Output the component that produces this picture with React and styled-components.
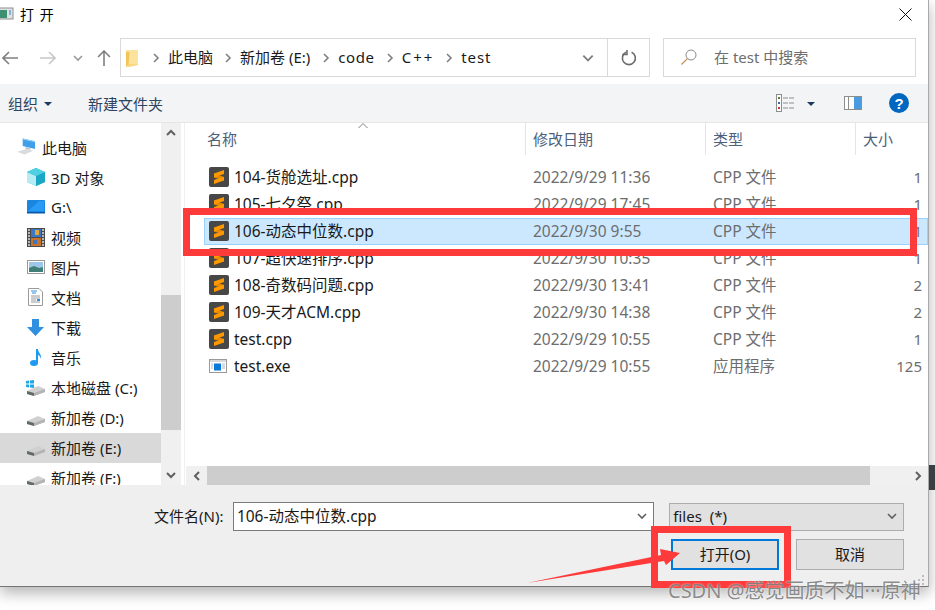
import { Fragment } from 'react';
import styled, { createGlobalStyle } from 'styled-components';

const FONT = '"Noto Sans", "Noto Sans CJK SC", sans-serif';

const GlobalStyle = createGlobalStyle`
	html, body {
		margin: 0;
		background: #fff;
		overflow: hidden;
	}
	* {
		box-sizing: border-box;
	}
`;

const Page = styled.div`
	position: relative;
	width: 935px;
	height: 610px;
	overflow: hidden;
	background: #fff;
	font-family: ${FONT};
	font-size: 15px;
	color: #1a1a1a;
`;

const Window = styled.div`
	width: 929px;
	height: 587px;
	display: flex;
	flex-direction: column;
	background: #fff;
	border-right: 1px solid #a9a9a9;
	border-bottom: 1px solid #747474;
	box-shadow: 0 6px 14px rgba(0, 0, 0, 0.3);
`;

const TitleBar = styled.div`
	height: 38px;
	flex: none;
	display: flex;
	align-items: center;
	padding: 0 16px 10px 0;
`;

const TitleText = styled.span`
	margin-left: 6px;
	font-size: 14px;
	letter-spacing: 1px;
	flex: 1;
	color: #000;
`;

const NavRow = styled.div`
	height: 46px;
	flex: none;
	display: flex;
	align-items: flex-start;
`;

const NavButtons = styled.div`
	width: 120px;
	height: 39px;
	flex: none;
	display: grid;
	grid-template-columns: 2px 16px 22px 16px 16px 12px 13px 14px;
	align-items: center;
`;

const AddressBox = styled.div`
	width: 530px;
	height: 39px;
	flex: none;
	display: flex;
	align-items: center;
	border: 1px solid #d9d9d9;
	padding-left: 5px;
`;

const FolderSlot = styled.span`
	display: flex;
	margin-right: 11px;
`;

const CrumbLabel = styled.span`
	margin: 0 ${({ $after }) => $after}px 2px 6px;
	letter-spacing: ${({ $spacing }) => $spacing || 0}px;
	color: #1a1a1a;
	white-space: nowrap;
`;

const Spacer = styled.div`
	flex: 1;
`;

const RefreshCell = styled.div`
	width: 42px;
	height: 100%;
	display: flex;
	align-items: center;
	justify-content: center;
	border-left: 1px solid #d9d9d9;
	margin-left: 12px;
`;

const SearchBox = styled.div`
	width: 253px;
	height: 39px;
	flex: none;
	margin-left: 13px;
	display: flex;
	align-items: center;
	gap: 17px;
	padding: 0 0 2px 17px;
	border: 1px solid #d9d9d9;
	color: #6d6d6d;
`;

const Toolbar = styled.div`
	height: 39px;
	flex: none;
	display: flex;
	align-items: center;
	background: #f3f4f6;
	border-bottom: 1px solid #e6e6e6;
	padding: 0 19px 0 8px;
	color: #2d4560;
	font-size: 15px;
`;

const ToolLabel = styled.span`
	margin-right: 6px;
`;

const ToolGroup = styled.div`
	margin-left: ${({ $left }) => $left || 0}px;
	display: flex;
	align-items: center;
`;

const Caret = styled.span`
	width: 0;
	height: 0;
	margin: 1px 0 0 ${({ $left }) => $left || 0}px;
	border-left: 4px solid transparent;
	border-right: 4px solid transparent;
	border-top: 4px solid #1f3a5f;
`;

const Main = styled.div`
	height: 362px;
	flex: none;
	display: flex;
`;

const Sidebar = styled.div`
	width: 161px;
	flex: none;
	overflow: hidden;
	padding-top: 10px;
`;

const TreeRow = styled.div`
	height: 30px;
	flex: none;
	display: flex;
	align-items: center;
	gap: 6px;
	white-space: nowrap;
	padding: 0 0 2px ${({ $root }) => ($root ? 17 : 26)}px;
	background: ${({ $active }) => ($active ? '#d9d9d9' : 'transparent')};
`;

const IconSlot = styled.span`
	width: 19px;
	height: 20px;
	flex: none;
	display: flex;
	align-items: center;
	justify-content: center;
`;

const VScroll = styled.div`
	width: 20px;
	flex: none;
	display: flex;
	flex-direction: column;
	background: #f0f0f0;
`;

const ScrollButton = styled.div`
	height: ${({ $size }) => $size}px;
	width: ${({ $wide }) => ($wide ? '21px' : 'auto')};
	flex: none;
	display: flex;
	align-items: center;
	justify-content: center;
`;

const VThumb = styled.div`
	height: 135px;
	margin-top: 152px;
	background: #cdcdcd;
`;

const ListPane = styled.div`
	flex: 1;
	min-width: 0;
	display: flex;
	flex-direction: column;
	margin-left: 3px;
	border-left: 1px solid #f0f0f0;
`;

const HeaderRow = styled.div`
	position: relative;
	height: 32px;
	flex: none;
	display: grid;
	grid-template-columns: 341px 180px 150px 1fr;
	color: #4c607a;
	font-size: 15px;
`;

const HeaderCell = styled.div`
	display: flex;
	align-items: center;
	padding: 0 0 2px ${({ $pad }) => $pad || 7}px;
	border-right: ${({ $last }) => ($last ? 'none' : '1px solid #e5e5e5')};
`;

const SortMark = styled.svg`
	position: absolute;
	left: 173px;
	top: 0;
`;

const FileList = styled.div`
	flex: 1;
	min-height: 0;
	padding: 9px 0 0 19px;
`;

const FileRow = styled.div`
	height: 27px;
	display: grid;
	grid-template-columns: 25px 299px 180px 150px 1fr;
	align-items: center;
	padding: 0 0 3px 4px;
	border: 1px solid ${({ $selected }) => ($selected ? '#99d1ff' : 'transparent')};
	background: ${({ $selected }) => ($selected ? '#cce8ff' : 'transparent')};
	white-space: nowrap;
`;

const FileName = styled.span`
	color: #1a1a1a;
	font-size: 15.5px;
`;

const FileMeta = styled.span`
	color: #6d6d6d;
	font-size: 15.5px;
`;

const FileSize = styled.span`
	color: #6d6d6d;
	justify-self: end;
	padding-right: 5px;
`;

const HScroll = styled.div`
	height: 19px;
	flex: none;
	margin-left: 1px;
	display: flex;
	background: #f0f0f0;
`;

const HThumb = styled.div`
	width: 663px;
	background: #cdcdcd;
`;

const Footer = styled.div`
	position: relative;
	flex: 1;
	background: #efefef;
	padding: 17px 24px 0 154px;
`;

const NameRow = styled.div`
	display: flex;
	align-items: center;
`;

const NameLabel = styled.span`
	width: 79px;
	margin-bottom: 2px;
	white-space: nowrap;
`;

const NameInput = styled.div`
	width: 422px;
	height: 29px;
	display: flex;
	align-items: center;
	justify-content: space-between;
	padding: 0 5px 2px 3px;
	background: #fff;
	border: 1px solid #7a7a7a;
	font-size: 15.5px;
`;

const FilterSelect = styled.div`
	width: 235px;
	height: 28px;
	margin-left: 15px;
	display: flex;
	align-items: center;
	justify-content: space-between;
	padding: 0 5px 2px 3px;
	background: #e1e1e1;
	border: 1px solid #adadad;
	white-space: pre;
`;

const ButtonRow = styled.div`
	margin: 8px 0 0 517px;
	display: flex;
	gap: 17px;
`;

const DialogButton = styled.div`
	width: 108px;
	height: 31px;
	flex: none;
	display: flex;
	align-items: center;
	justify-content: center;
	padding-bottom: 2px;
	background: #e1e1e1;
	border: ${({ $primary }) => ($primary ? '2px solid #0078d7' : '1px solid #adadad')};
`;

const Grip = styled.svg`
	position: absolute;
	right: 3px;
	bottom: 0;
`;

const RedFrame = styled.div`
	position: absolute;
	left: ${({ $x }) => $x}px;
	top: ${({ $y }) => $y}px;
	width: ${({ $w }) => $w}px;
	height: ${({ $h }) => $h}px;
	border: 7px solid #ff3a3a;
`;

const ArrowMark = styled.svg`
	position: absolute;
	left: 520px;
	top: 540px;
`;

const EdgeBlock = styled.div`
	position: absolute;
	left: 929px;
	top: 465px;
	width: 6px;
	height: 25px;
	background: #3a3f42;
`;

const Watermark = styled.div`
	position: absolute;
	left: 668px;
	top: 575px;
	font-size: 20px;
	white-space: nowrap;
	color: rgba(110, 110, 110, 0.8);
	text-shadow: 0 0 2px rgba(255, 255, 255, 0.9);
`;

const Chevron = ({ dir = 'right', color = '#808080', size = 12, width = 1.6 }) => {
	const points = {
		right: '4,2 8,6 4,10',
		left: '8,2 4,6 8,10',
		down: '2,4 6,8 10,4',
		up: '2,8 6,4 10,8',
	};
	return (
		<svg width={size} height={size} viewBox="0 0 12 12" fill="none">
			<polyline points={points[dir]} stroke={color} strokeWidth={width} />
		</svg>
	);
};

const ArrowLeft = ({ color, flip }) => (
	<svg width="16" height="14" viewBox="0 0 16 14" fill="none" transform={flip ? 'scale(-1 1)' : undefined}>
		<path d="M1 7H16M7 1L1 7L7 13" stroke={color} strokeWidth="1.6" />
	</svg>
);

const ArrowUp = () => (
	<svg width="14" height="16" viewBox="0 0 14 16" fill="none">
		<path d="M7 16V1M1 7L7 1L13 7" stroke="#808080" strokeWidth="1.6" />
	</svg>
);

const WindowGlyph = () => (
	<svg width="14" height="14" viewBox="0 0 14 14">
		<rect x="-1" y="1" width="14" height="11" fill="#dfe3e6" stroke="#8d8d8d" />
		<rect x="0" y="3" width="7" height="8" fill="#3d8f6f" />
		<rect x="9" y="3" width="2" height="5" fill="#7fb4d8" />
	</svg>
);

const CloseGlyph = () => (
	<svg width="13" height="13" viewBox="0 0 13 13" fill="none">
		<path d="M0.5 0.5L12.5 12.5M12.5 0.5L0.5 12.5" stroke="#111" strokeWidth="1" />
	</svg>
);

const FolderGlyph = () => (
	<svg width="13" height="18" viewBox="0 0 13 18">
		<path d="M0 1H12V16L3 18H0Z" fill="#f9d77f" />
		<path d="M0 1H12V15H0Z" fill="#fbe39d" />
		<path d="M0 3V16H2.5L3.5 3Z" fill="#f2c55c" />
	</svg>
);

const RefreshGlyph = () => (
	<svg width="16" height="16" viewBox="0 0 16 16" fill="none">
		<path d="M10.6 2.2A6.5 6.5 0 1 1 5 2.3" stroke="#6d6d6d" strokeWidth="1.6" />
		<path d="M5 0V5.5H0.6" stroke="#6d6d6d" strokeWidth="1.6" transform="translate(1 -1)" />
	</svg>
);

const SearchGlyph = () => (
	<svg width="16" height="16" viewBox="0 0 16 16" fill="none">
		<circle cx="10" cy="6" r="5" stroke="#8a8a8a" />
		<path d="M6.4 9.6L0.5 15.5" stroke="#c58b52" strokeWidth="1.2" />
	</svg>
);

const ViewGlyph = () => (
	<svg width="19" height="18" viewBox="0 0 19 18" fill="none">
		<rect x="0.5" y="0.5" width="5" height="17" fill="#fff" stroke="#8d8d8d" />
		<rect x="2" y="3" width="2" height="2" fill="#5a7a3a" />
		<rect x="2" y="8" width="2" height="2" fill="#3e6aa0" />
		<rect x="2" y="13" width="2" height="2" fill="#c0392b" />
		<path d="M7 4H19M7 9H19M7 14H19" stroke="#8d8d8d" strokeDasharray="5 1" />
	</svg>
);

const PaneGlyph = () => (
	<svg width="18" height="14" viewBox="0 0 18 14">
		<rect x="0.5" y="0.5" width="17" height="13" fill="#fff" stroke="#8d8d8d" />
		<rect x="4" y="1" width="1" height="12" fill="#8d8d8d" />
		<rect x="10" y="1" width="7" height="12" fill="#4a9be0" />
	</svg>
);

const HelpGlyph = () => (
	<svg width="20" height="20" viewBox="0 0 20 20">
		<circle cx="10" cy="10" r="10" fill="#0067c0" />
		<text x="10" y="15.5" textAnchor="middle" fontSize="15" fontWeight="700" fontFamily="Liberation Sans" fill="#fff">?</text>
	</svg>
);

const SublimeGlyph = () => (
	<svg width="20" height="20" viewBox="0 0 20 20">
		<rect width="20" height="20" rx="2" fill="#474747" />
		<path d="M5 6.5L15 10V13.5L5 10.5Z" fill="#e68a00" />
		<path d="M15 3V7L5 10.5V6.5Z" fill="#ff9800" />
		<path d="M15 9.7V13.5L5 17V13Z" fill="#ff9800" />
	</svg>
);

const ExeGlyph = () => (
	<svg width="18" height="14" viewBox="0 0 18 14">
		<rect x="0.5" y="0.5" width="17" height="13" fill="#fff" stroke="#9a9a9a" />
		<rect x="1" y="1" width="16" height="2" fill="#d8d8d8" />
		<rect x="5" y="4.5" width="7" height="7" fill="#0a78d7" />
		<path d="M2 5H4M2 7H4M2 9H4M13 5H16M13 7H16M13 9H16" stroke="#aeb9c4" />
	</svg>
);

const ComputerGlyph = () => (
	<svg width="20" height="18" viewBox="0 0 20 18">
		<path d="M6 0L19 3V11L6 8Z" fill="#3f9fe8" />
		<path d="M6 0L19 3V4L6 1Z" fill="#9ad0f5" />
		<path d="M9 9L14 10V12L9 11Z" fill="#b9c3cb" />
		<path d="M0 14L10 11L17 13L8 17Z" fill="#d8dcdf" />
	</svg>
);

const CubeGlyph = () => (
	<svg width="18" height="18" viewBox="0 0 18 18">
		<path d="M9 0L18 4V14L9 18L0 14V4Z" fill="#25b9cf" />
		<path d="M0 4L9 8V18L0 14Z" fill="#b7ecf2" />
		<path d="M9 8L18 4V14L9 18Z" fill="#1aa6c5" />
		<path d="M9 0L18 4L9 8L0 4Z" fill="#4fd0e2" />
	</svg>
);

const ScreenGlyph = () => (
	<svg width="18" height="14" viewBox="0 0 18 14">
		<rect width="18" height="13" rx="1" fill="#1a86e0" />
		<path d="M1 11L12 1H17V11Z" fill="#2a9bf5" />
		<rect y="12" width="18" height="1.5" fill="#0b5aa8" />
	</svg>
);

const FilmGlyph = () => (
	<svg width="18" height="19" viewBox="0 0 18 19">
		<rect width="18" height="19" fill="#4a4a4a" />
		<rect x="4" y="1" width="10" height="8" fill="#3b78c4" />
		<rect x="4" y="10" width="10" height="8" fill="#c8732c" />
		<path d="M8 2H12V7H8Z" fill="#e0a63a" />
		<path d="M6 12H10V16H6Z" fill="#3b78c4" />
		<path d="M1 2H3M1 5H3M1 8H3M1 11H3M1 14H3M1 17H3M15 2H17M15 5H17M15 8H17M15 11H17M15 14H17M15 17H17" stroke="#ddd" strokeWidth="1.4" />
	</svg>
);

const PictureGlyph = () => (
	<svg width="18" height="14" viewBox="0 0 18 14">
		<rect x="0.5" y="0.5" width="17" height="13" fill="#fff" stroke="#9a9a9a" />
		<rect x="2" y="2" width="14" height="6" fill="#9cc6ea" />
		<path d="M2 8L7 6L12 8L16 7V12H2Z" fill="#3f7f78" />
	</svg>
);

const DocGlyph = () => (
	<svg width="15" height="18" viewBox="0 0 15 18" fill="none">
		<path d="M0.5 0.5H11L14.5 4V17.5H0.5Z" fill="#fff" stroke="#9a9a9a" />
		<path d="M3 3H9M4 5H8" stroke="#2f8fe0" />
		<path d="M3 8H12M3 10H12M3 12H8M3 14H12" stroke="#9a9a9a" />
		<rect x="9" y="11" width="3" height="2" fill="#2f8fe0" />
	</svg>
);

const DownGlyph = () => (
	<svg width="17" height="17" viewBox="0 0 17 17">
		<path d="M5 0H12V8H17L8.5 17L0 8H5Z" fill="#2f8fe0" />
	</svg>
);

const NoteGlyph = () => (
	<svg width="12" height="17" viewBox="0 0 12 17">
		<ellipse cx="4" cy="14" rx="4" ry="3" fill="#1e9bf0" />
		<path d="M6 0H8C8 4 12 5 11 10C10 7 9 6 8 6V14H6Z" fill="#1e9bf0" />
	</svg>
);

const DriveGlyph = ({ windows }) => (
	<svg width="19" height="17" viewBox="0 0 19 17">
		{windows && <path d="M0 2L3 1.5V4.5H0ZM4 1.4L8 1V4.5H4ZM0 5.5H3V8.5L0 8ZM4 5.5H8V9L4 8.6Z" fill="#1fa6e8" />}
		<path d="M1 12L12 7L19 10V13L8 17L1 15Z" fill="#d0d0d0" />
		<path d="M1 12L8 14V17L1 15Z" fill="#5f6b63" />
		<path d="M8 14L19 10V13L8 17Z" fill="#b4b4b4" />
	</svg>
);

const crumbs = [
	{ label: '此电脑', after: 9 },
	{ label: '新加卷 (E:)', after: 10 },
	{ label: 'code', spacing: 0.6, after: 9 },
	{ label: 'C++', spacing: 2, after: 9 },
	{ label: 'test', spacing: 0.9 },
];

const treeItems = [
	{ label: '此电脑', icon: <ComputerGlyph />, root: true },
	{ label: '3D 对象', icon: <CubeGlyph /> },
	{ label: 'G:\\', icon: <ScreenGlyph /> },
	{ label: '视频', icon: <FilmGlyph /> },
	{ label: '图片', icon: <PictureGlyph /> },
	{ label: '文档', icon: <DocGlyph /> },
	{ label: '下载', icon: <DownGlyph /> },
	{ label: '音乐', icon: <NoteGlyph /> },
	{ label: '本地磁盘 (C:)', icon: <DriveGlyph windows /> },
	{ label: '新加卷 (D:)', icon: <DriveGlyph /> },
	{ label: '新加卷 (E:)', icon: <DriveGlyph />, active: true },
	{ label: '新加卷 (F:)', icon: <DriveGlyph /> },
];

const files = [
	{ name: '104-货舱选址.cpp', date: '2022/9/29 11:36', type: 'CPP 文件', size: '1' },
	{ name: '105-七夕祭.cpp', date: '2022/9/29 17:45', type: 'CPP 文件', size: '1' },
	{ name: '106-动态中位数.cpp', date: '2022/9/30 9:55', type: 'CPP 文件', size: '1', selected: true },
	{ name: '107-超快速排序.cpp', date: '2022/9/30 10:35', type: 'CPP 文件', size: '1' },
	{ name: '108-奇数码问题.cpp', date: '2022/9/30 13:41', type: 'CPP 文件', size: '2' },
	{ name: '109-天才ACM.cpp', date: '2022/9/30 14:38', type: 'CPP 文件', size: '2' },
	{ name: 'test.cpp', date: '2022/9/29 10:55', type: 'CPP 文件', size: '1' },
	{ name: 'test.exe', date: '2022/9/29 10:55', type: '应用程序', size: '125', exe: true },
];

const App = () => (
	<Page>
		<GlobalStyle />
		<Window>
			<TitleBar>
				<WindowGlyph />
				<TitleText>打 开</TitleText>
				<CloseGlyph />
			</TitleBar>

			<NavRow>
				<NavButtons>
					<span />
					<ArrowLeft color="#808080" />
					<span />
					<ArrowLeft color="#c8c8c8" flip />
					<span />
					<Chevron dir="down" color="#9a9a9a" size={12} />
					<span />
					<ArrowUp />
				</NavButtons>
				<AddressBox>
					<FolderSlot>
						<FolderGlyph />
					</FolderSlot>
					{crumbs.map(({ label, spacing, after = 0 }) => (
						<Fragment key={label}>
							<Chevron />
							<CrumbLabel $spacing={spacing} $after={after}>{label}</CrumbLabel>
						</Fragment>
					))}
					<Spacer />
					<Chevron dir="down" size={14} />
					<RefreshCell>
						<RefreshGlyph />
					</RefreshCell>
				</AddressBox>
				<SearchBox>
					<SearchGlyph />
					在 test 中搜索
				</SearchBox>
			</NavRow>

			<Toolbar>
				<ToolLabel>组织</ToolLabel>
				<Caret />
				<ToolGroup $left={36}>新建文件夹</ToolGroup>
				<Spacer />
				<ToolGroup>
					<ViewGlyph />
					<Caret $left={12} />
				</ToolGroup>
				<ToolGroup $left={29}>
					<PaneGlyph />
				</ToolGroup>
				<ToolGroup $left={27}>
					<HelpGlyph />
				</ToolGroup>
			</Toolbar>

			<Main>
				<Sidebar>
					{treeItems.map(({ label, icon, root, active }) => (
						<TreeRow key={label} $root={root} $active={active}>
							<IconSlot>{icon}</IconSlot>
							{label}
						</TreeRow>
					))}
				</Sidebar>
				<VScroll>
					<ScrollButton $size={20}>
						<Chevron dir="up" color="#606060" width={2} />
					</ScrollButton>
					<VThumb />
					<Spacer />
					<ScrollButton $size={20}>
						<Chevron dir="down" color="#606060" width={2} />
					</ScrollButton>
				</VScroll>
				<ListPane>
					<HeaderRow>
						<HeaderCell $pad={22}>名称</HeaderCell>
						<HeaderCell>修改日期</HeaderCell>
						<HeaderCell>类型</HeaderCell>
						<HeaderCell $last>大小</HeaderCell>
						<SortMark width="10" height="6" viewBox="0 0 10 6" fill="none">
							<polyline points="0.5,5 5,0.5 9.5,5" stroke="#808080" />
						</SortMark>
					</HeaderRow>
					<FileList>
						{files.map(({ name, date, type, size, selected, exe }) => (
							<FileRow key={name} $selected={selected}>
								{exe ? <ExeGlyph /> : <SublimeGlyph />}
								<FileName>{name}</FileName>
								<FileMeta>{date}</FileMeta>
								<FileMeta>{type}</FileMeta>
								<FileSize>{size}</FileSize>
							</FileRow>
						))}
					</FileList>
					<HScroll>
						<ScrollButton $size={19} $wide>
							<Chevron dir="left" color="#606060" width={2} />
						</ScrollButton>
						<HThumb />
						<Spacer />
						<ScrollButton $size={19} $wide>
							<Chevron dir="right" color="#606060" width={2} />
						</ScrollButton>
					</HScroll>
				</ListPane>
			</Main>

			<Footer>
				<NameRow>
					<NameLabel>文件名(N):</NameLabel>
					<NameInput>
						106-动态中位数.cpp
						<Chevron dir="down" color="#606060" />
					</NameInput>
					<FilterSelect>
						files  (*)
						<Chevron dir="down" color="#606060" />
					</FilterSelect>
				</NameRow>
				<ButtonRow>
					<DialogButton $primary>打开(O)</DialogButton>
					<DialogButton>取消</DialogButton>
				</ButtonRow>
				<Grip width="11" height="11" viewBox="0 0 11 11" fill="#bdbdbd">
					<rect x="8" y="0" width="2" height="2" />
					<rect x="4" y="4" width="2" height="2" />
					<rect x="8" y="4" width="2" height="2" />
					<rect x="0" y="8" width="2" height="2" />
					<rect x="4" y="8" width="2" height="2" />
					<rect x="8" y="8" width="2" height="2" />
				</Grip>
			</Footer>
		</Window>

		<EdgeBlock />
		<RedFrame $x={183} $y={208} $w={734} $h={48} />
		<RedFrame $x={651} $y={526} $w={140} $h={62} />
		<ArrowMark width="165" height="50" viewBox="0 0 165 50">
			<path d="M7 43L141 15L140 9L160 13L146 25L144 21Z" fill="#ff3a3a" />
		</ArrowMark>
		<Watermark>CSDN @感觉画质不如···原神</Watermark>
	</Page>
);

export default App;
